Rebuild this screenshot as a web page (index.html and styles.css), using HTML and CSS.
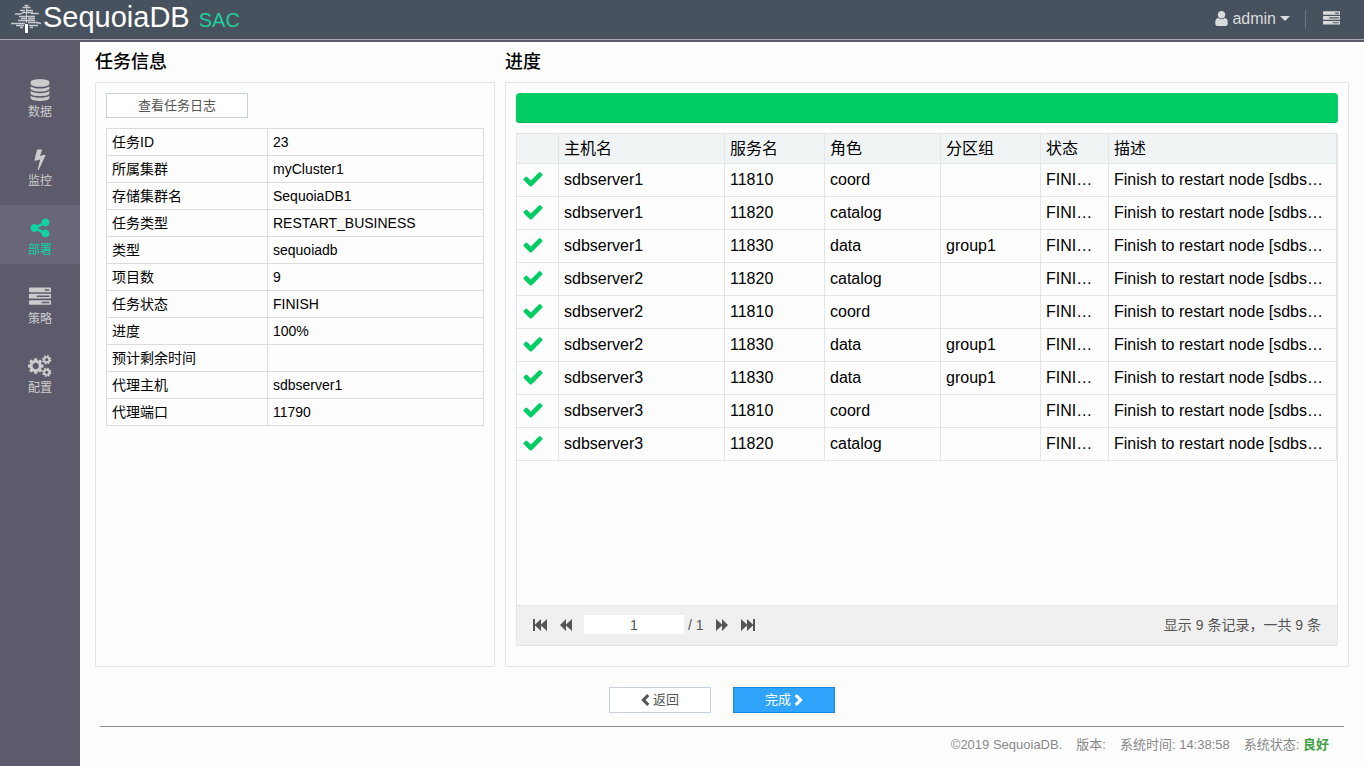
FILE: index.html
```html
<!DOCTYPE html>
<html lang="zh-CN">
<head>
<meta charset="utf-8">
<title>SequoiaDB SAC</title>
<link rel="stylesheet" href="styles.css">
</head>
<body>
<svg class="sprite" aria-hidden="true">
  <symbol id="i-check" viewBox="0 0 1792 1792"><path d="M1671 566q0 40-28 68l-724 724-136 136q-28 28-68 28t-68-28l-136-136-362-362q-28-28-28-68t28-68l136-136q28-28 68-28t68 28l294 295 656-657q28-28 68-28t68 28l136 136q28 28 28 68z"/></symbol>
  <symbol id="i-user" viewBox="256 128 1280 1536"><path d="M1536 1399q0 109-62.500 187t-150.500 78h-854q-88 0-150.500-78t-62.500-187q0-85 8.500-160.500t31.500-152 58.500-131 94-89 134.500-34.500q131 128 313 128t313-128q76 0 134.500 34.500t94 89 58.500 131 31.500 152 8.500 160.500zm-256-887q0 159-112.500 271.500t-271.500 112.500-271.500-112.500-112.500-271.500 112.500-271.500 271.500-112.500 271.500 112.500 112.500 271.500z"/></symbol>
  <symbol id="i-bolt" viewBox="0 0 1792 1792"><path d="M1333 566q18 20 7 44l-540 1157q-13 25-42 25-4 0-14-2-17-5-25.500-19t-4.500-30l197-808-406 101q-4 1-12 1-18 0-31-11-18-15-13-39l201-825q4-14 16-23t28-9h328q19 0 32 12.500t13 29.500q0 8-5 18l-171 463 396-98q8-2 12-2 19 0 34 15z"/></symbol>
  <symbol id="i-share" viewBox="0 0 1792 1792"><path d="M1344 1024q133 0 226.500 93.500t93.500 226.500-93.500 226.500-226.500 93.500-226.500-93.500-93.500-226.500q0-12 2-34l-360-180q-92 86-218 86-133 0-226.500-93.500t-93.500-226.500 93.500-226.500 226.500-93.500q126 0 218 86l360-180q-2-22-2-34 0-133 93.500-226.500t226.500-93.500 226.500 93.500 93.500 226.500-93.500 226.500-226.500 93.500q-126 0-218-86l-360 180q2 22 2 34t-2 34l360 180q92-86 218-86z"/></symbol>
  <symbol id="i-database" viewBox="0 0 1792 1792"><path d="M896 768q237 0 443-43t325-127v170q0 69-103 128t-280 93.500-385 34.500-385-34.500-280-93.500-103-128v-170q119 84 325 127t443 43zm0 768q237 0 443-43t325-127v170q0 69-103 128t-280 93.500-385 34.500-385-34.500-280-93.500-103-128v-170q119 84 325 127t443 43zm0-384q237 0 443-43t325-127v170q0 69-103 128t-280 93.500-385 34.500-385-34.500-280-93.500-103-128v-170q119 84 325 127t443 43zm0-1152q208 0 385 34.500t280 93.500 103 128v128q0 69-103 128t-280 93.500-385 34.500-385-34.500-280-93.500-103-128v-128q0-69 103-128t280-93.500 385-34.500z"/></symbol>
  <symbol id="i-tasks" viewBox="0 0 1792 1792"><path d="M1024 1408h640v-128h-640v128zm-384-512h1024v-128h-1024v128zm640-512h384v-128h-384v128zm512 832v256q0 26-19 45t-45 19h-1664q-26 0-45-19t-19-45v-256q0-26 19-45t45-19h1664q26 0 45 19t19 45zm0-512v256q0 26-19 45t-45 19h-1664q-26 0-45-19t-19-45v-256q0-26 19-45t45-19h1664q26 0 45 19t19 45zm0-512v256q0 26-19 45t-45 19h-1664q-26 0-45-19t-19-45v-256q0-26 19-45t45-19h1664q26 0 45 19t19 45z"/></symbol>
  <symbol id="i-cogs" viewBox="0 0 1856 1792">
    <path d="M832 896q0-106-75-181t-181-75-181 75-75 181 75 181 181 75 181-75 75-181zm384-91v185q0 10-7 19.500t-16 10.500l-155 24q-11 35-32 76 34 48 90 115 7 11 7 20 0 12-7 19-23 30-82.500 89.500t-78.500 59.500q-11 0-21-7l-115-90q-37 19-77 31-11 108-23 155-7 24-30 24h-186q-11 0-20-7.500t-10-17.500l-23-153q-34-10-75-31l-118 89q-7 7-20 7-11 0-21-8-144-133-144-160 0-9 7-19 10-14 41-53t47-61q-23-44-35-82l-152-24q-10-1-17-9.500t-7-19.500v-185q0-10 7-19.500t16-10.500l155-24q11-35 32-76-34-48-90-115-7-11-7-20 0-12 7-20 22-30 82-89t79-59q11 0 21 7l115 90q34-18 77-32 11-108 23-154 7-24 30-24h186q11 0 20 7.500t10 17.500l23 153q34 10 75 31l118-89q8-7 20-7 11 0 21 8 144 133 144 160 0 8-7 19-12 16-42 54t-45 60q23 48 34 82l152 23q10 2 17 10.500t7 19.500z"/>
    <g fill="none" stroke="currentColor">
      <circle cx="1472" cy="384" r="210" stroke-width="160"/><circle cx="1472" cy="384" r="320" stroke-width="120" stroke-dasharray="150 101"/>
      <circle cx="1472" cy="1408" r="210" stroke-width="160"/><circle cx="1472" cy="1408" r="320" stroke-width="120" stroke-dasharray="150 101"/>
    </g>
  </symbol>
  <symbol id="i-left" viewBox="0 0 10 14"><path d="M7 0 9.500 2.500 5 7 9.500 11.500 7 14 0 7z"/></symbol>
  <symbol id="i-right" viewBox="0 0 10 14"><path d="M3 0 .5 2.500 5 7 .5 11.500 3 14 10 7z"/></symbol>
  <symbol id="i-first" viewBox="0 0 16 14"><path d="M1 1h2v5.500L9 1v5.500L15 1v12L9 7.500V13L3 7.500V13H1z"/></symbol>
  <symbol id="i-prev" viewBox="0 0 14 14"><path d="M1 7 7 1v5.500L13 1v12L7 7.500V13z"/></symbol>
  <symbol id="i-next" viewBox="0 0 14 14"><path d="M13 7 7 1v5.500L1 1v12l6-5.500V13z"/></symbol>
  <symbol id="i-last" viewBox="0 0 16 14"><path d="M15 1h-2v5.500L7 1v5.500L1 1v12l6-5.500V13l6-5.500V13h2z"/></symbol>
</svg>

<header class="topbar">
  <a class="brand" href="#">
    <svg class="tree" viewBox="0 0 32 30" fill="none" stroke="currentColor" aria-hidden="true">
      <path d="M14.500 1.500h4M12.500 3.500h8M10 6.500h5M17 6.500h6M12 8.500h11M5 10h5l3-1M21 9.500h8M9 12.500h16M11 14.500h5M18 14.500h7M8 16.500h17M1 19.500h14M18 18.500h9l4 1M6 21.500h8M19 21.500h9M10 23.500h3M20 23.500h3" stroke-width="1.300"/>
      <path d="M16.500 1v18" stroke-width="1"/>
      <path d="M16.500 20v9" stroke="#fff" stroke-width="3"/>
    </svg>
    <span class="brand-name">SequoiaDB</span>
    <span class="brand-sub">SAC</span>
  </a>
  <div class="tools">
    <button class="user" type="button"><svg class="ico-user" aria-hidden="true"><use href="#i-user"/></svg>admin<span class="caret"></span></button>
    <button class="menu" type="button" aria-label="菜单"><svg class="ico-menu" aria-hidden="true"><use href="#i-tasks"/></svg></button>
  </div>
</header>

<div class="shell">
  <nav class="sidebar">
    <a href="#"><svg><use href="#i-database"/></svg>数据</a>
    <a href="#"><svg><use href="#i-bolt"/></svg>监控</a>
    <a class="active" href="#"><svg><use href="#i-share"/></svg>部署</a>
    <a href="#"><svg><use href="#i-tasks"/></svg>策略</a>
    <a href="#"><svg class="cogs"><use href="#i-cogs"/></svg>配置</a>
  </nav>

  <div class="page">
    <main class="columns">
      <section class="col-info">
        <h2>任务信息</h2>
        <div class="panel">
          <button class="btn btn-log" type="button">查看任务日志</button>
          <table class="info">
            <tr><th>任务ID</th><td>23</td></tr>
            <tr><th>所属集群</th><td>myCluster1</td></tr>
            <tr><th>存储集群名</th><td>SequoiaDB1</td></tr>
            <tr><th>任务类型</th><td>RESTART_BUSINESS</td></tr>
            <tr><th>类型</th><td>sequoiadb</td></tr>
            <tr><th>项目数</th><td>9</td></tr>
            <tr><th>任务状态</th><td>FINISH</td></tr>
            <tr><th>进度</th><td>100%</td></tr>
            <tr><th>预计剩余时间</th><td></td></tr>
            <tr><th>代理主机</th><td>sdbserver1</td></tr>
            <tr><th>代理端口</th><td>11790</td></tr>
          </table>
        </div>
      </section>

      <section class="col-progress">
        <h2>进度</h2>
        <div class="panel">
          <div class="bar" role="progressbar" aria-label="进度" aria-valuenow="100" aria-valuemin="0" aria-valuemax="100"></div>
          <div class="grid">
            <table class="nodes">
              <colgroup><col class="c-icon"><col class="c-host"><col class="c-svc"><col class="c-role"><col class="c-group"><col class="c-state"><col></colgroup>
              <thead><tr><th></th><th>主机名</th><th>服务名</th><th>角色</th><th>分区组</th><th>状态</th><th>描述</th></tr></thead>
              <tbody>
                <tr><td><svg><use href="#i-check"/></svg></td><td>sdbserver1</td><td>11810</td><td>coord</td><td></td><td>FINISH</td><td>Finish to restart node [sdbserver1:11810]</td></tr>
                <tr><td><svg><use href="#i-check"/></svg></td><td>sdbserver1</td><td>11820</td><td>catalog</td><td></td><td>FINISH</td><td>Finish to restart node [sdbserver1:11820]</td></tr>
                <tr><td><svg><use href="#i-check"/></svg></td><td>sdbserver1</td><td>11830</td><td>data</td><td>group1</td><td>FINISH</td><td>Finish to restart node [sdbserver1:11830]</td></tr>
                <tr><td><svg><use href="#i-check"/></svg></td><td>sdbserver2</td><td>11820</td><td>catalog</td><td></td><td>FINISH</td><td>Finish to restart node [sdbserver2:11820]</td></tr>
                <tr><td><svg><use href="#i-check"/></svg></td><td>sdbserver2</td><td>11810</td><td>coord</td><td></td><td>FINISH</td><td>Finish to restart node [sdbserver2:11810]</td></tr>
                <tr><td><svg><use href="#i-check"/></svg></td><td>sdbserver2</td><td>11830</td><td>data</td><td>group1</td><td>FINISH</td><td>Finish to restart node [sdbserver2:11830]</td></tr>
                <tr><td><svg><use href="#i-check"/></svg></td><td>sdbserver3</td><td>11830</td><td>data</td><td>group1</td><td>FINISH</td><td>Finish to restart node [sdbserver3:11830]</td></tr>
                <tr><td><svg><use href="#i-check"/></svg></td><td>sdbserver3</td><td>11810</td><td>coord</td><td></td><td>FINISH</td><td>Finish to restart node [sdbserver3:11810]</td></tr>
                <tr><td><svg><use href="#i-check"/></svg></td><td>sdbserver3</td><td>11820</td><td>catalog</td><td></td><td>FINISH</td><td>Finish to restart node [sdbserver3:11820]</td></tr>
              </tbody>
            </table>
            <div class="pager">
              <button type="button" aria-label="首页"><svg class="wide"><use href="#i-first"/></svg></button>
              <button type="button" aria-label="上一页"><svg><use href="#i-prev"/></svg></button>
              <input type="text" value="1" aria-label="页码">
              <span class="total">/ 1</span>
              <button type="button" aria-label="下一页"><svg><use href="#i-next"/></svg></button>
              <button type="button" aria-label="末页"><svg class="wide"><use href="#i-last"/></svg></button>
              <span class="summary">显示 9 条记录，一共 9 条</span>
            </div>
          </div>
        </div>
      </section>
    </main>

    <div class="actions">
      <button class="btn" type="button"><svg><use href="#i-left"/></svg>返回</button>
      <button class="btn btn-primary" type="button">完成<svg><use href="#i-right"/></svg></button>
    </div>

    <footer class="foot">
      <span>©2019 SequoiaDB.</span>
      <span>版本:</span>
      <span>系统时间: 14:38:58</span>
      <span>系统状态: <b>良好</b></span>
    </footer>
  </div>
</div>
</body>
</html>
```
FILE: styles.css
```css
* { box-sizing: border-box; }

body {
  margin: 0;
  min-height: 100vh;
  display: flex;
  flex-direction: column;
  background: #fdfdfd;
  color: #000;
  font: 14px/20px "Liberation Sans", "Noto Sans CJK SC", sans-serif;
}

svg { display: block; fill: currentColor; }
.sprite { position: absolute; width: 0; height: 0; }
a { color: inherit; text-decoration: none; }
button, input { font: inherit; color: inherit; margin: 0; }

/* Top bar */
.topbar {
  height: 42px;
  display: flex;
  justify-content: space-between;
  background: #48525e;
  border-bottom: 2px solid #5d5b6b;
  box-shadow: inset 0 -1px #a9a8b1;
}
.brand {
  display: flex;
  align-items: baseline;
  height: 34px;
  padding-left: 10px;
  line-height: 34px;
  color: #fff;
}
.tree { width: 32px; height: 30px; align-self: flex-end; color: #c4c8cc; }
.brand-name { font-size: 29px; margin-left: 1px; }
.brand-sub { font-size: 20px; margin-left: 9px; color: #1fcf9c; }

.tools { display: flex; align-items: center; height: 37px; padding-right: 24px; color: #d9dbdd; }
.tools button { display: flex; align-items: center; border: 0; padding: 0; background: none; font-size: 16px; }
.ico-user { width: 13px; height: 15px; margin-right: 4px; }
.caret { margin-left: 4px; border: 5px solid transparent; border-top-color: currentColor; border-bottom: 0; }
.tools .menu { height: 18px; margin-left: 15px; padding-left: 17px; border-left: 1px solid #6f767e; }
.ico-menu { width: 17px; height: 17px; }

/* Sidebar */
.shell { flex: 1; display: flex; }
.sidebar {
  width: 80px;
  flex: none;
  display: flex;
  flex-direction: column;
  gap: 10px;
  padding-top: 25px;
  background: #5d5b6b;
  color: #ccc;
  font-size: 12px;
  line-height: 18px;
}
.sidebar a { height: 59px; display: flex; flex-direction: column; align-items: center; gap: 2px; padding-top: 12px; }
.sidebar svg { width: 22px; height: 22px; }
.sidebar .cogs { width: 24px; }
.sidebar .active { background: #686678; color: #0fd3a0; }

/* Content */
.page { flex: 1; min-width: 0; display: flex; flex-direction: column; }
.columns { flex: 1; display: flex; gap: 10px; padding: 0 15px; }
.col-info, .col-progress { display: flex; flex-direction: column; }
.col-info { width: 400px; flex: none; }
.col-progress { flex: 1; min-width: 0; }
h2 { margin: 0; height: 40px; font-size: 18px; line-height: 40px; font-weight: 500; }
.panel {
  flex: 1;
  display: flex;
  flex-direction: column;
  align-items: stretch;
  gap: 10px;
  padding: 10px;
  border: 1px solid #e3e6e8;
}

.btn {
  display: flex;
  align-items: center;
  justify-content: center;
  gap: 3px;
  width: 102px;
  height: 26px;
  padding: 0;
  border: 1px solid #c6d1dc;
  background: #fff;
  color: #555;
  font-size: 13px;
}
.btn svg { width: 9px; height: 12px; }
.btn-log { width: 142px; height: 25px; }
.btn-primary { border-color: #1c87dc; background: #2fa4fd; color: #fff; }

.info { width: 378px; border-collapse: collapse; table-layout: fixed; }
.info th, .info td { height: 27px; padding: 3px 5px; border: 1px solid #dcdcdc; text-align: left; font-weight: 400; }
.info th { width: 161px; }

.bar { height: 30px; border-radius: 4px; background: #00ce64; box-shadow: inset 0 -1px #00ac56; }

.grid { flex: 1; display: flex; flex-direction: column; margin-bottom: 10px; border: 1px solid #e3e6e8; }
.nodes { width: 100%; border-collapse: separate; border-spacing: 0; table-layout: fixed; font-size: 16px; }
.nodes th, .nodes td {
  height: 33px;
  padding: 0 12px 0 5px;
  border-right: 1px solid #e3e6e8;
  border-bottom: 1px solid #e3e6e8;
  text-align: left;
  font-weight: 400;
  white-space: nowrap;
  overflow: hidden;
  text-overflow: ellipsis;
}
.nodes th { height: 30px; background: #f0f4f5; }
.nodes td svg { width: 22px; height: 22px; margin-bottom: 2px; color: #00ce64; }
.c-icon { width: 42px; }
.c-host { width: 166px; }
.c-svc, .c-group { width: 100px; }
.c-role { width: 116px; }
.c-state { width: 68px; }

.pager {
  display: flex;
  align-items: center;
  height: 40px;
  margin-top: auto;
  padding: 0 16px 2px 15px;
  border-top: 1px solid #e3e6e8;
  background: #f0f0f0;
  color: #555;
}
.pager button { border: 0; padding: 0; margin-right: 11px; background: none; }
.pager svg { width: 14px; height: 14px; }
.pager .wide { width: 16px; }
.pager input { width: 100px; height: 19px; border: 0; padding: 0; background: #fff; text-align: center; }
.total { margin: 0 11px 0 4px; }
.summary { margin-left: auto; }

.actions { display: flex; justify-content: center; gap: 22px; margin: 20px 0 13px; }

.foot {
  display: flex;
  justify-content: flex-end;
  gap: 14px;
  height: 40px;
  margin: 0 20px;
  padding: 8px 15px 0 0;
  border-top: 1px solid #888;
  color: #888;
  font-size: 13px;
}
.foot b { color: #449d44; }
```
